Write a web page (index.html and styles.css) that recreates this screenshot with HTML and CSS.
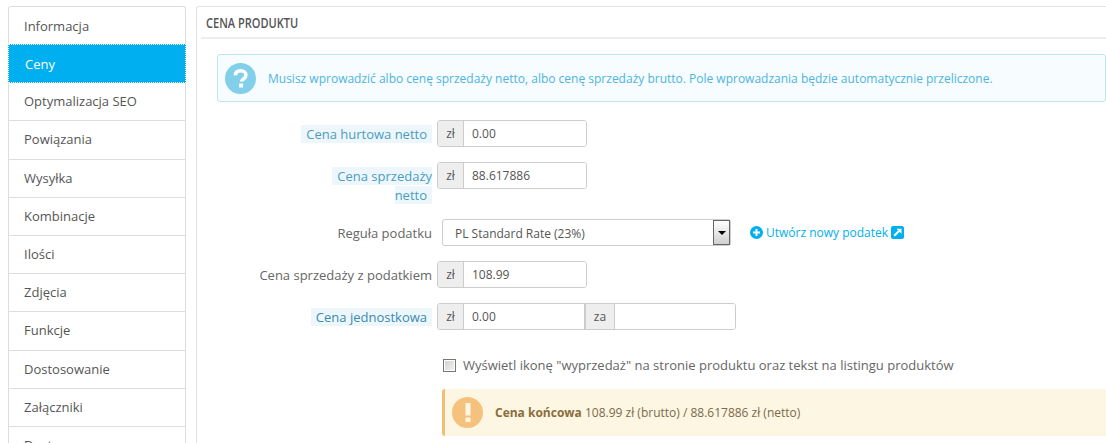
FILE: index.html
```html
<!DOCTYPE html>
<html lang="pl">
<head>
<meta charset="utf-8">
<title>Cena produktu</title>
<link rel="stylesheet" href="styles.css">
</head>
<body>
<div class="page">
  <nav class="tabs">
    <a class="tab first">Informacja</a>
    <a class="tab active">Ceny</a>
    <a class="tab">Optymalizacja SEO</a>
    <a class="tab">Powiązania</a>
    <a class="tab">Wysyłka</a>
    <a class="tab">Kombinacje</a>
    <a class="tab">Ilości</a>
    <a class="tab">Zdjęcia</a>
    <a class="tab">Funkcje</a>
    <a class="tab">Dostosowanie</a>
    <a class="tab">Załączniki</a>
    <a class="tab">Dostawcy</a>
  </nav>
  <main class="panel">
    <div class="panel-title"><h3 class="title-text">CENA PRODUKTU</h3></div>
    <div class="alert-info">
      <svg class="alert-icon" viewBox="0 0 31 31" width="31" height="31"><circle cx="15.5" cy="15.5" r="15.5" fill="#81cfe8"/><path d="M10.2 12.4c.3-3 2.5-4.6 5.4-4.6 3 0 5.3 1.7 5.3 4.2 0 3.700-4.100 3.800-4.100 6.600" fill="none" stroke="#fff" stroke-width="3.600"/><rect x="14.100" y="20.500" width="4" height="4" fill="#fff"/></svg>
      <span>Musisz wprowadzić albo cenę sprzedaży netto, albo cenę sprzedaży brutto. Pole wprowadzania będzie automatycznie przeliczone.</span>
    </div>
    <div class="form">
      <div class="row">
        <div class="label"><span class="hint">Cena hurtowa netto</span></div>
        <div class="group w150"><span class="addon">zł</span><span class="field">0.00</span></div>
      </div>
      <div class="row tall">
        <div class="label"><span class="hint">Cena sprzedaży<br>netto</span></div>
        <div class="group w150"><span class="addon">zł</span><span class="field">88.617886</span></div>
      </div>
      <div class="row">
        <div class="label plain">Reguła podatku</div>
        <div class="select-wrap">
          <span class="select-value">PL Standard Rate (23%)</span>
          <span class="select-btn"><i class="caret"></i></span>
        </div>
        <a class="link">
          <svg viewBox="0 0 13 13" width="13" height="13"><circle cx="6.500" cy="6.500" r="6.500" fill="#00aff0"/><path d="M3 6.500h7M6.500 3v7" stroke="#fff" stroke-width="2"/></svg>
          <span>Utwórz nowy podatek</span>
          <svg viewBox="0 0 13 13" width="13" height="13"><rect width="13" height="13" rx="2" fill="#00aff0"/><path d="M3.200 9.800 8.500 4.500" stroke="#fff" stroke-width="2"/><path d="M5.500 2.700h5v5z" fill="#fff"/></svg>
        </a>
      </div>
      <div class="row">
        <div class="label plain">Cena sprzedaży z podatkiem</div>
        <div class="group w150"><span class="addon">zł</span><span class="field">108.99</span></div>
      </div>
      <div class="row">
        <div class="label"><span class="hint dark">Cena jednostkowa</span></div>
        <div class="group w299"><span class="addon">zł</span><span class="field f120">0.00</span><span class="addon mid">za</span><span class="field"></span></div>
      </div>
      <label class="check"><input class="box" type="checkbox"><span>Wyświetl ikonę "wyprzedaż" na stronie produktu oraz tekst na listingu produktów</span></label>
      <div class="alert-warn">
        <svg class="alert-icon" viewBox="0 0 31 31" width="31" height="31"><circle cx="15.500" cy="15.500" r="15.500" fill="#f5c27e"/><rect x="13.500" y="6" width="5" height="12.500" fill="#fdf6e3"/><rect x="13.500" y="20.500" width="5" height="4.500" fill="#fdf6e3"/></svg>
        <span><b>Cena końcowa</b> 108.99 zł (brutto) / 88.617886 zł (netto)</span>
      </div>
    </div>
  </main>
</div>
</body>
</html>
```
FILE: styles.css
```css
* { box-sizing: border-box; }
html, body { margin: 0; height: 100%; overflow: hidden; background: #fff; }
body { font-family: "Open Sans", sans-serif; font-size: 13px; color: #666; }
.page { display: flex; gap: 10px; padding: 6px 0 0 8px; height: 443px; overflow: hidden; }

.tabs { flex: 0 0 178px; height: 480px; border: 1px solid #ddd; border-bottom: 0; border-radius: 3px 3px 0 0; background: #fff; display: flex; flex-direction: column; align-self: flex-start; }
.tab { display: flex; align-items: center; height: 38.2px; flex: none; padding-left: 15px; padding-bottom: 1px; border-bottom: 1px solid #ddd; color: #555; }
.tab.first { height: 38px; padding-top: 1px; padding-bottom: 0; }
.tab.active { margin: -1px -1px 0; height: 39.2px; padding: 1px 0 0 16px; color: #fff; background: #00aff0; border: 1px dotted #fff; }

.panel { flex: 1; min-width: 0; border: 1px solid #e4e4e4; border-right: 0; border-bottom: 0; border-radius: 3px 0 0 0; padding: 0 0 0 4px; }
.panel-title { margin: 0 0 15px; height: 32px; padding-left: 5px; border-bottom: 2px solid #eee; }
.title-text { margin: 0; width: 130px; font: 600 15px/30px "Open Sans", sans-serif; color: #555; transform: scaleX(0.735); transform-origin: left center; white-space: nowrap; }

.alert-info { display: flex; align-items: center; gap: 12px; height: 48px; margin-left: 16px; padding-left: 7px; background: #f6fcff; border: 1px solid #bde5ef; border-radius: 3px; color: #4db5dc; font-size: 12px; }
.alert-icon { flex: none; }

.form { padding-top: 18px; }
.row { display: flex; align-items: flex-start; margin-bottom: 15px; }
.row.tall { margin-bottom: 14.500px; }
.label { flex: none; width: 231px; text-align: right; line-height: 19px; padding-top: 4.500px; }
.plain { color: #666; }
.hint { background: #edf7fb; color: #4b9cc0; padding: 0 5px; }
.hint.dark { color: #3a8ab0; }

.group { display: flex; height: 27px; margin-left: 5px; border: 1px solid #ccc; border-radius: 3px; color: #555; font-size: 12px; overflow: hidden; }
.w150 { width: 150px; }
.w299 { width: 299px; }
.addon { flex: none; width: 26px; background: #eee; border-right: 1px solid #ccc; display: flex; align-items: center; justify-content: center; font-size: 12px; }
.addon.mid { width: 31px; border-left: 2px solid #ccc; }
.field { flex: 1; padding-left: 8px; line-height: 25px; font-size: 12px; background: #fff; }
.f120 { flex: 0 0 120px; }

.select-wrap { position: relative; width: 289px; height: 27px; margin-left: 10px; border: 1px solid #ccc; border-radius: 3px; color: #555; font-size: 12px; line-height: 27px; padding-left: 12px; background: #fff; }
.select-btn { position: absolute; top: 0; right: 0; width: 17px; height: 25px; border: 1px solid #666; background: linear-gradient(#fff, #d0d0d0); display: flex; align-items: center; justify-content: center; }
.caret { width: 0; height: 0; border: 4px solid transparent; border-top: 4px solid #000; border-bottom: 0; }

.link { display: flex; align-items: center; gap: 3px; margin-left: 19px; height: 27px; color: #00aff0; font-size: 12px; }

.check { display: flex; align-items: center; margin: 25px 0 0 242px; height: 20px; font-size: 13px; color: #666; }
.box { appearance: none; flex: none; margin: 0 7px 0 0; width: 13px; height: 13px; border: 1px solid #777; background: linear-gradient(135deg, #cfcfcf, #f4f4f4); box-shadow: inset 0 0 0 1px #fff; }

.alert-warn { display: flex; align-items: center; gap: 12px; height: 47px; margin: 14px 0 0 241px; padding-left: 7px; background: #fdf6e3; border-left: 3px solid #f3bd72; border-radius: 3px 0 0 3px; color: #7a6a4a; font-size: 12px; }
.alert-warn b { color: #8a6d3b; }
```
